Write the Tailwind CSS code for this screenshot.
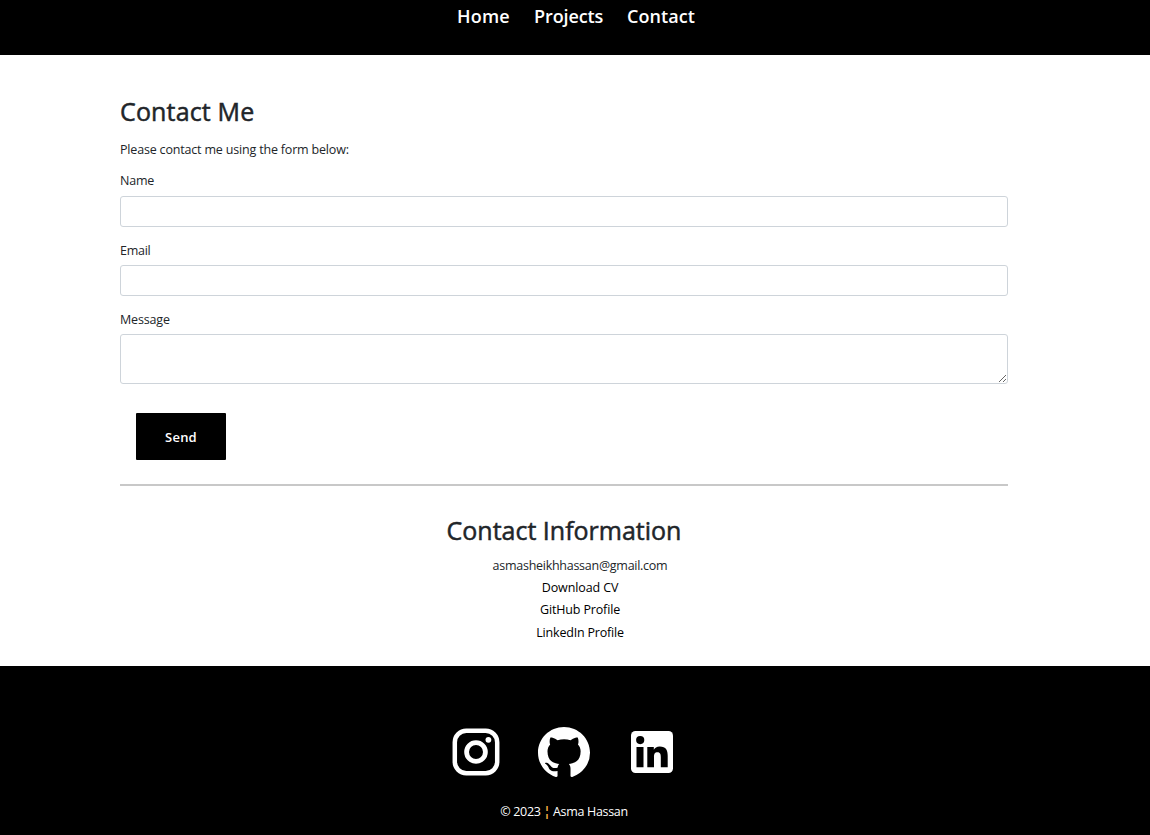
<!DOCTYPE html>
<html lang="en">
<head>
<meta charset="utf-8">
<title>Contact</title>
<script src="https://cdn.jsdelivr.net/npm/@tailwindcss/browser@4"></script>
</head>
<body class="bg-white text-[#212529] font-['Segoe_UI','Open_Sans',sans-serif] text-[12.5px] leading-[22px]">
<div class="w-[1150px] h-[835px] flex flex-col overflow-hidden">
  <header class="h-[55px] shrink-0 bg-black text-white">
    <nav class="flex gap-6 pl-[457px] pt-[3px] text-[18px] leading-[27px] font-semibold whitespace-nowrap">
      <a class="w-[53px] tracking-[0.2px]">Home</a>
      <a class="w-[69px] tracking-[-0.1px]">Projects</a>
      <a class="w-[68px] tracking-[0.05px]">Contact</a>
    </nav>
  </header>
  <main class="h-[611px] shrink-0 w-[888px] ml-[120px] flex flex-col">
    <h2 class="mt-[40px] text-[25px] leading-[32px] tracking-[0.15px] [-webkit-text-stroke:0.5px_#212529]">Contact Me</h2>
    <p class="mt-[12px] tracking-[-0.18px]">Please contact me using the form below:</p>
    <form class="flex flex-col">
      <label class="mt-[9px] tracking-[-0.2px]">Name</label>
      <input class="mt-[4px] h-[31px] border border-[#ced4da] rounded-[3px]">
      <label class="mt-[13px] tracking-[-0.25px]">Email</label>
      <input class="mt-[3px] h-[31px] border border-[#ced4da] rounded-[3px]">
      <label class="mt-[13px] tracking-[-0.15px]">Message</label>
      <textarea class="mt-[3px] h-[50px] border border-[#ced4da] rounded-[3px]"></textarea>
      <button type="button" class="mt-[29px] ml-4 w-[90px] h-[47px] bg-black text-white text-[13px] font-semibold tracking-[0.2px] rounded-[1px]">Send</button>
    </form>
    <hr class="mt-[24px] border-0 h-[2px] shrink-0 bg-[#c8c8c8]">
    <section class="text-center">
      <h2 class="mt-[28px] text-[25px] leading-[32px] [-webkit-text-stroke:0.5px_#212529]">Contact Information</h2>
      <ul class="mt-[9px] pl-8 leading-[22.2px]">
        <li class="tracking-[-0.27px]">asmasheikhhassan@gmail.com</li>
        <li class="text-black tracking-[-0.1px]">Download CV</li>
        <li class="text-black tracking-[-0.15px]">GitHub Profile</li>
        <li class="text-black tracking-[-0.2px]">LinkedIn Profile</li>
      </ul>
    </section>
  </main>
  <footer class="h-[169px] shrink-0 bg-black text-white">
    <div class="flex items-center pt-[60px] pl-[452px] h-[112px]">
      <svg class="w-12 h-12 shrink-0" viewBox="0 0 48 48" fill="none" stroke="white"><rect x="2.8" y="2.8" width="42.4" height="42.4" rx="11.5" stroke-width="4.5"/><circle cx="24" cy="24" r="9.4" stroke-width="4.8"/><circle cx="36.4" cy="11.8" r="2.9" fill="white" stroke="none"/></svg>
      <svg class="w-[52px] h-[50px] ml-[38px] shrink-0" preserveAspectRatio="none" viewBox="0 0 16 15.6" fill="white"><path d="M8 0C3.58 0 0 3.58 0 8c0 3.54 2.29 6.53 5.47 7.59.4.07.55-.17.55-.38 0-.19-.01-.82-.01-1.49-2.01.37-2.53-.49-2.69-.94-.09-.23-.48-.94-.82-1.13-.28-.15-.68-.52-.01-.53.63-.01 1.08.58 1.23.82.72 1.21 1.87.87 2.33.66.07-.52.28-.87.51-1.07-1.78-.2-3.64-.89-3.64-3.95 0-.87.31-1.59.82-2.15-.08-.2-.36-1.02.08-2.12 0 0 .67-.21 2.2.82.64-.18 1.32-.27 2-.27s1.36.09 2 .27c1.53-1.04 2.2-.82 2.2-.82.44 1.1.16 1.92.08 2.12.51.56.82 1.27.82 2.15 0 3.07-1.87 3.75-3.65 3.95.29.25.54.73.54 1.48 0 1.07-.01 1.93-.01 2.2 0 .21.15.46.55.38A8.01 8.01 0 0 0 16 8c0-4.42-3.58-8-8-8z"/></svg>
      <svg class="w-[42px] h-[42px] ml-[41px] shrink-0" viewBox="0 0 42 42"><rect width="42" height="42" rx="4.5" fill="white"/><circle cx="9.2" cy="9.1" r="4.1"/><path d="M5.500 16h7v20.300h-7zM16.3 16h6.500v2.800c1-1.8 2.900-3.300 5.900-3.300 6.400 0 8 3.800 8 9.500v11.300H29.800V26.200c0-2.600-.4-5-3.300-5s-3.500 2-3.500 4.900v10.200h-6.700z"/></svg>
    </div>
    <p class="mt-[23px] text-center pr-[22px] tracking-[-0.32px]">© 2023 <span class="text-[#ffb347] font-bold">¦</span> Asma Hassan</p>
  </footer>
</div>
</body>
</html>
